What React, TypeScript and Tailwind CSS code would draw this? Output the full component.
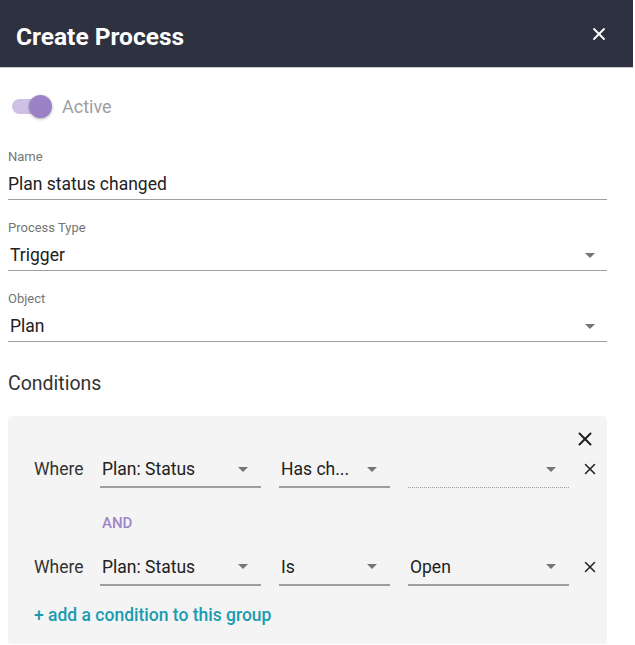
import { X } from 'lucide-react';

const Caret = () => (
  <svg width="10" height="5" viewBox="0 0 10 5" className="shrink-0">
    <path d="M0 0 L10 0 L5 5 Z" fill="#757575" />
  </svg>
);

const Field = ({ label, value, select }: { label: string; value: string; select?: boolean }) => (
  <div className="flex flex-col">
    <span className="text-[13px] leading-none text-[#757575]">{label}</span>
    <div className="flex items-center justify-between border-b border-[#9e9e9e] h-[37px] pt-[6px]">
      <span className={`text-[17.5px] text-[#212121] ${select ? 'pl-[2px]' : ''}`}>{value}</span>
      {select && <span className="pr-[12px]"><Caret /></span>}
    </div>
  </div>
);

const MiniSelect = ({ value, width, dotted }: { value: string; width: string; dotted?: boolean }) => (
  <div
    className={`flex items-center justify-between h-[38px] pt-[2px] pl-[2px] pr-[13px] ${width} ${
      dotted ? 'border-b border-dotted border-[#9e9e9e]' : 'border-b-2 border-[#9e9e9e]'
    }`}
  >
    <span className="text-[17.5px] text-[#212121] whitespace-nowrap">{value}</span>
    <Caret />
  </div>
);

const ConditionRow = ({ op, value, dotted }: { op: string; value: string; dotted?: boolean }) => (
  <div className="flex items-center">
    <span className="w-[66px] pl-[26px] text-[17.5px] text-[#333] whitespace-nowrap">Where</span>
    <div className="flex items-center gap-[18px] ml-[26px]">
      <MiniSelect value="Plan: Status" width="w-[161px]" />
      <MiniSelect value={op} width="w-[111px]" />
      <MiniSelect value={value} width="w-[161px]" dotted={dotted} />
    </div>
    <X className="ml-[12px] text-[#212121]" size={18} strokeWidth={2} />
  </div>
);

export default function App() {
  return (
    <div className="w-[635px] h-[645px] bg-white overflow-hidden" style={{ fontFamily: 'Roboto, sans-serif' }}>
      <div className="w-[633px] h-[68px] bg-[#2e3240] flex items-center justify-between pl-[16px] pr-[24px] border-b border-[#c8c8c8]">
        <h1 className="text-[24.5px] font-bold text-white pt-[7px]">Create Process</h1>
        <X className="text-white" size={20} strokeWidth={2.2} />
      </div>

      <div className="px-[8px] w-[615px]">
        <div className="flex items-center gap-[10px] mt-[25px] pl-[4px]">
          <div className="relative w-[40px] h-[24px] flex items-center">
            <div className="w-[38px] h-[15px] rounded-full bg-[#cfc1e3]" />
            <div className="absolute right-0 top-0 w-[23px] h-[23px] rounded-full bg-[#9b82c6] shadow-[0_1px_3px_rgba(0,0,0,0.3)]" />
          </div>
          <span className="text-[18px] text-[#9e9e9e]">Active</span>
        </div>

        <div className="mt-[30px] flex flex-col gap-[21px]">
          <Field label="Name" value="Plan status changed" />
          <Field label="Process Type" value="Trigger" select />
          <Field label="Object" value="Plan" select />
        </div>

        <h2 className="mt-[27px] text-[19.5px] text-[#333]">Conditions</h2>

        <div className="mt-[18px] bg-[#f4f4f4] rounded-[4px] pb-[16px] w-[599px]">
          <div className="flex justify-end pr-[11px] pt-[12px]">
            <X className="text-[#212121]" size={22} strokeWidth={2.2} />
          </div>
          <div>
            <ConditionRow op="Has ch..." value="" dotted />
          </div>
          <div className="pl-[94px] mt-[24px] text-[15px] font-medium text-[#a084c9]">AND</div>
          <div className="mt-[13px]">
            <ConditionRow op="Is" value="Open" />
          </div>
          <div className="mt-[16px] pl-[26px] text-[17.5px] font-medium text-[#1a9bb0]">+ add a condition to this group</div>
        </div>
      </div>
    </div>
  );
}
